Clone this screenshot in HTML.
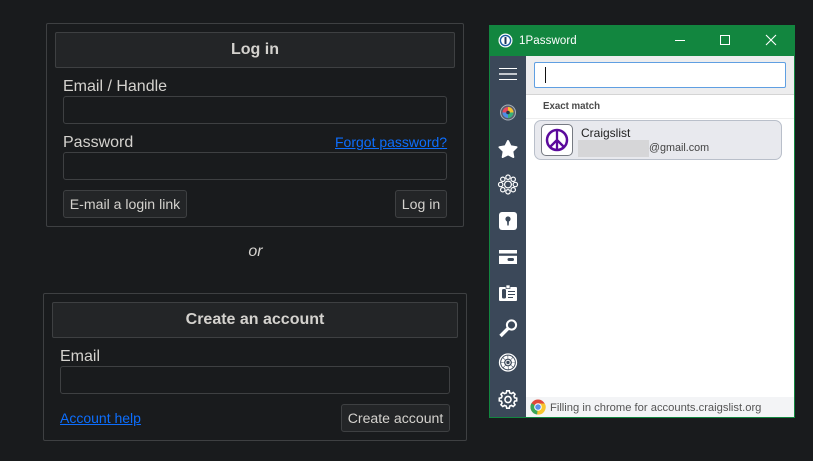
<!DOCTYPE html>
<html><head><meta charset="utf-8"><style>
html,body{margin:0;padding:0;width:813px;height:461px;overflow:hidden;background:#191b1d;font-family:"Liberation Sans",sans-serif}
div,a,span{position:absolute;box-sizing:border-box;white-space:nowrap}
.box{border:1px solid #3e4042;border-radius:2px}
.hd{background:#232527;border:1px solid #3e4042;border-radius:2px;height:36px;color:#d4d2ce;font-weight:bold;font-size:16px;line-height:34px;text-align:center}
.lb{color:#d4d2ce;font-size:16px;line-height:18px}
.in{border:1px solid #3e4042;border-radius:3px;height:28px;background:#191b1d}
.bt{border:1px solid #3e4042;border-radius:3px;height:28px;background:#232527;color:#d4d2ce;font-size:14.1px;line-height:27px;text-align:center}
a{color:#0d6efd;font-size:14px;line-height:18px;text-decoration:underline}
.t{color:#222;font-size:12px;line-height:14px}
svg{position:absolute}
</style></head><body>
<div class="box" style="left:46px;top:23px;width:418px;height:204px"></div>
<div class="hd" style="left:55px;top:32px;width:400px">Log in</div>
<div class="lb" style="left:63px;top:78px">Email / Handle</div>
<div class="in" style="left:63px;top:96px;width:384px"></div>
<div class="lb" style="left:63px;top:134px">Password</div>
<a style="left:335px;top:133px">Forgot password?</a>
<div class="in" style="left:63px;top:152px;width:384px"></div>
<div class="bt" style="left:63px;top:190px;width:124px">E-mail a login link</div>
<div class="bt" style="left:395px;top:190px;width:52px">Log in</div>
<div style="left:0;top:243px;width:511px;text-align:center;color:#d4d2ce;font-size:16px;font-style:italic;line-height:18px">or</div>
<div class="box" style="left:43px;top:293px;width:424px;height:148px"></div>
<div class="hd" style="left:52px;top:302px;width:406px">Create an account</div>
<div class="lb" style="left:60px;top:348px">Email</div>
<div class="in" style="left:60px;top:366px;width:390px"></div>
<a style="left:60px;top:409px">Account help</a>
<div class="bt" style="left:341px;top:404px;width:109px">Create account</div>

<div style="left:489px;top:25px;width:306px;height:393px;background:#fff;border:1px solid #12863f"></div>
<div style="left:490px;top:26px;width:304px;height:30px;background:#12863f"></div>
<svg style="left:498px;top:32px" width="18" height="18" viewBox="0 0 18 18"><circle cx="7.500" cy="8.500" r="7" fill="#fff"/><circle cx="7.500" cy="8.500" r="5.800" fill="#1a5c9e"/><circle cx="7.500" cy="8.500" r="4.400" fill="#fff"/><rect x="6.500" y="5" width="2" height="7" rx=".5" fill="#1b3558"/></svg>
<div style="left:519px;top:34px;color:#fff;font-size:11.500px;line-height:15px;letter-spacing:.1px">1Password</div>
<div style="left:675px;top:40px;width:10px;height:1px;background:#fff"></div>
<div style="left:720px;top:35px;width:10px;height:10px;border:1px solid #fff"></div>
<svg style="left:765px;top:34px" width="12" height="12" viewBox="0 0 12 12"><path d="M1 1L11 11M11 1L1 11" stroke="#fff" stroke-width="1.100" fill="none"/></svg>

<div style="left:490px;top:56px;width:36px;height:361px;background:#3b4859"></div>
<div style="left:526px;top:56px;width:268px;height:39px;background:#ededee;border-bottom:1px solid #d4d4d4"></div>
<div style="left:534px;top:62px;width:252px;height:26px;background:#fff;border:1px solid #5f9fe2;border-radius:2px"></div>
<div style="left:545px;top:67px;width:1px;height:16px;background:#111"></div>
<div style="left:526px;top:96px;width:268px;height:23px;background:#fff;border-bottom:1px solid #eeeeee"></div>
<div style="left:543px;top:100px;color:#4a4a4a;font-size:9.700px;font-weight:bold;line-height:14px">Exact match</div>
<div style="left:534px;top:120px;width:248px;height:40px;background:#e8e9ee;border:1px solid #b9bfca;border-radius:7px"></div>
<div style="left:541px;top:124px;width:32px;height:32px;background:#fff;border:1px solid #767a82;border-radius:5px"></div>
<svg style="left:541px;top:124px" width="32" height="32" viewBox="0 0 32 32"><circle cx="16" cy="16" r="10" fill="none" stroke="#5b0a9c" stroke-width="2.500"/><path d="M16 6V26M16 16L9 23M16 16L23 23" stroke="#5b0a9c" stroke-width="2.300" fill="none"/></svg>
<div class="t" style="left:581px;top:126px">Craigslist</div>
<div style="left:578px;top:140px;width:71px;height:17px;background:#d6d6d8"></div>
<div class="t" style="left:649px;top:141px;font-size:10.800px;color:#444">@gmail.com</div>

<div style="left:526px;top:397px;width:268px;height:20px;background:#f3f4f6"></div>
<svg style="left:530px;top:399px" width="16" height="16" viewBox="0 0 16 16"><circle cx="8" cy="8" r="7.500" fill="#e0483a"/><path d="M8 8L1.500 4.200A7.500 7.500 0 0 0 7.200 15.500Z" fill="#3aa757"/><path d="M8 4.500H14.800A7.500 7.500 0 0 1 7.200 15.500Z" fill="#f7c52f"/><circle cx="8" cy="8" r="3.800" fill="#fff"/><circle cx="8" cy="8" r="2.800" fill="#5a8fea"/></svg>
<div style="left:550px;top:401px;color:#555;font-size:11.200px;line-height:14px">Filling in chrome for accounts.craigslist.org</div>

<svg style="left:490px;top:56px" width="36" height="361" viewBox="0 0 36 361" fill="#fff">
<path d="M9 12.500H27M9 23.500H27" stroke="#fff" stroke-width="1"/><path d="M9 18H27" stroke="#c4c8ce" stroke-width="2"/>
<circle cx="18" cy="56.500" r="7.500" fill="#555f6d" stroke="#a9b0b9" stroke-width="1"/>
<circle cx="18" cy="56.500" r="5.500" fill="#e84a5f"/><path d="M18 56.500V51A5.500 5.500 0 0 1 23.500 56.500Z" fill="#f2c230"/><path d="M18 56.500H23.500A5.500 5.500 0 0 1 18 62Z" fill="#38b27a"/><path d="M18 56.500V62A5.500 5.500 0 0 1 12.500 56.500Z" fill="#4a8fe8"/><circle cx="18" cy="56.500" r="1.800" fill="#2c3440"/>
<path d="M18 85L20.600 90.300 26.500 91.200 22.300 95.300 23.300 101 18 98.300 12.700 101 13.700 95.300 9.500 91.200 15.400 90.300Z" stroke="#fff" stroke-width="2" stroke-linejoin="round"/>
<g fill="none" stroke="#fff" stroke-width="1.200"><circle cx="18" cy="128.500" r="3.400"/><circle cx="18" cy="121.200" r="2.200"/><circle cx="18" cy="135.800" r="2.200"/><circle cx="10.700" cy="128.500" r="2.200"/><circle cx="25.300" cy="128.500" r="2.200"/><circle cx="12.800" cy="123.300" r="2.200"/><circle cx="23.200" cy="123.300" r="2.200"/><circle cx="12.800" cy="133.700" r="2.200"/><circle cx="23.200" cy="133.700" r="2.200"/></g>
<rect x="9" y="156" width="18" height="18" rx="3"/><circle cx="18" cy="163" r="2.600" fill="#3b4859"/><path d="M17 164H19L18.700 169.500H17.300Z" fill="#3b4859"/>
<rect x="9" y="194" width="18" height="3.500"/><rect x="9" y="199.800" width="18" height="8.200"/><rect x="17.500" y="202" width="6.500" height="3" rx="1.500" fill="#3b4859"/>
<rect x="9" y="231" width="18" height="14" rx="1"/><rect x="16" y="229" width="4" height="3.500" stroke="#3b4859" stroke-width=".7"/><rect x="12" y="233" width="4" height="9.500" rx="1.500" fill="#3b4859"/><path d="M18 235.500H25M18 238.500H25M18 241.500H23" stroke="#3b4859" stroke-width="1.100"/>
<g fill="none" stroke="#fff"><circle cx="21.500" cy="269" r="4.600" stroke-width="2"/><path d="M18 272.500L10.500 280" stroke-width="3.400"/></g>
<g fill="none" stroke="#fff"><circle cx="18" cy="306.500" r="8.500" stroke-width="1.300"/><circle cx="18" cy="306.500" r="5.400" stroke-width="3" stroke-dasharray="3.700 .54"/><circle cx="18" cy="306.500" r="2.200" stroke-width="1"/></g>
<g transform="translate(18 343.500) scale(.87) translate(-18 -345)"><path d="M16.500 335H19.500L20 337.400 22 338.200 24 336.900 26.100 339 24.800 341 25.600 343 28 343.500V346.500L25.600 347 24.800 349 26.100 351 24 353.100 22 351.800 20 352.600 19.500 355H16.500L16 352.600 14 351.800 12 353.100 9.900 351 11.200 349 10.400 347 8 346.500V343.500L10.400 343 11.200 341 9.900 339 12 336.900 14 338.200 16 337.400Z" fill="none" stroke="#fff" stroke-width="1.800"/><circle cx="18" cy="345" r="3.500" fill="none" stroke="#fff" stroke-width="1.800"/></g>
</svg>
</body></html>
